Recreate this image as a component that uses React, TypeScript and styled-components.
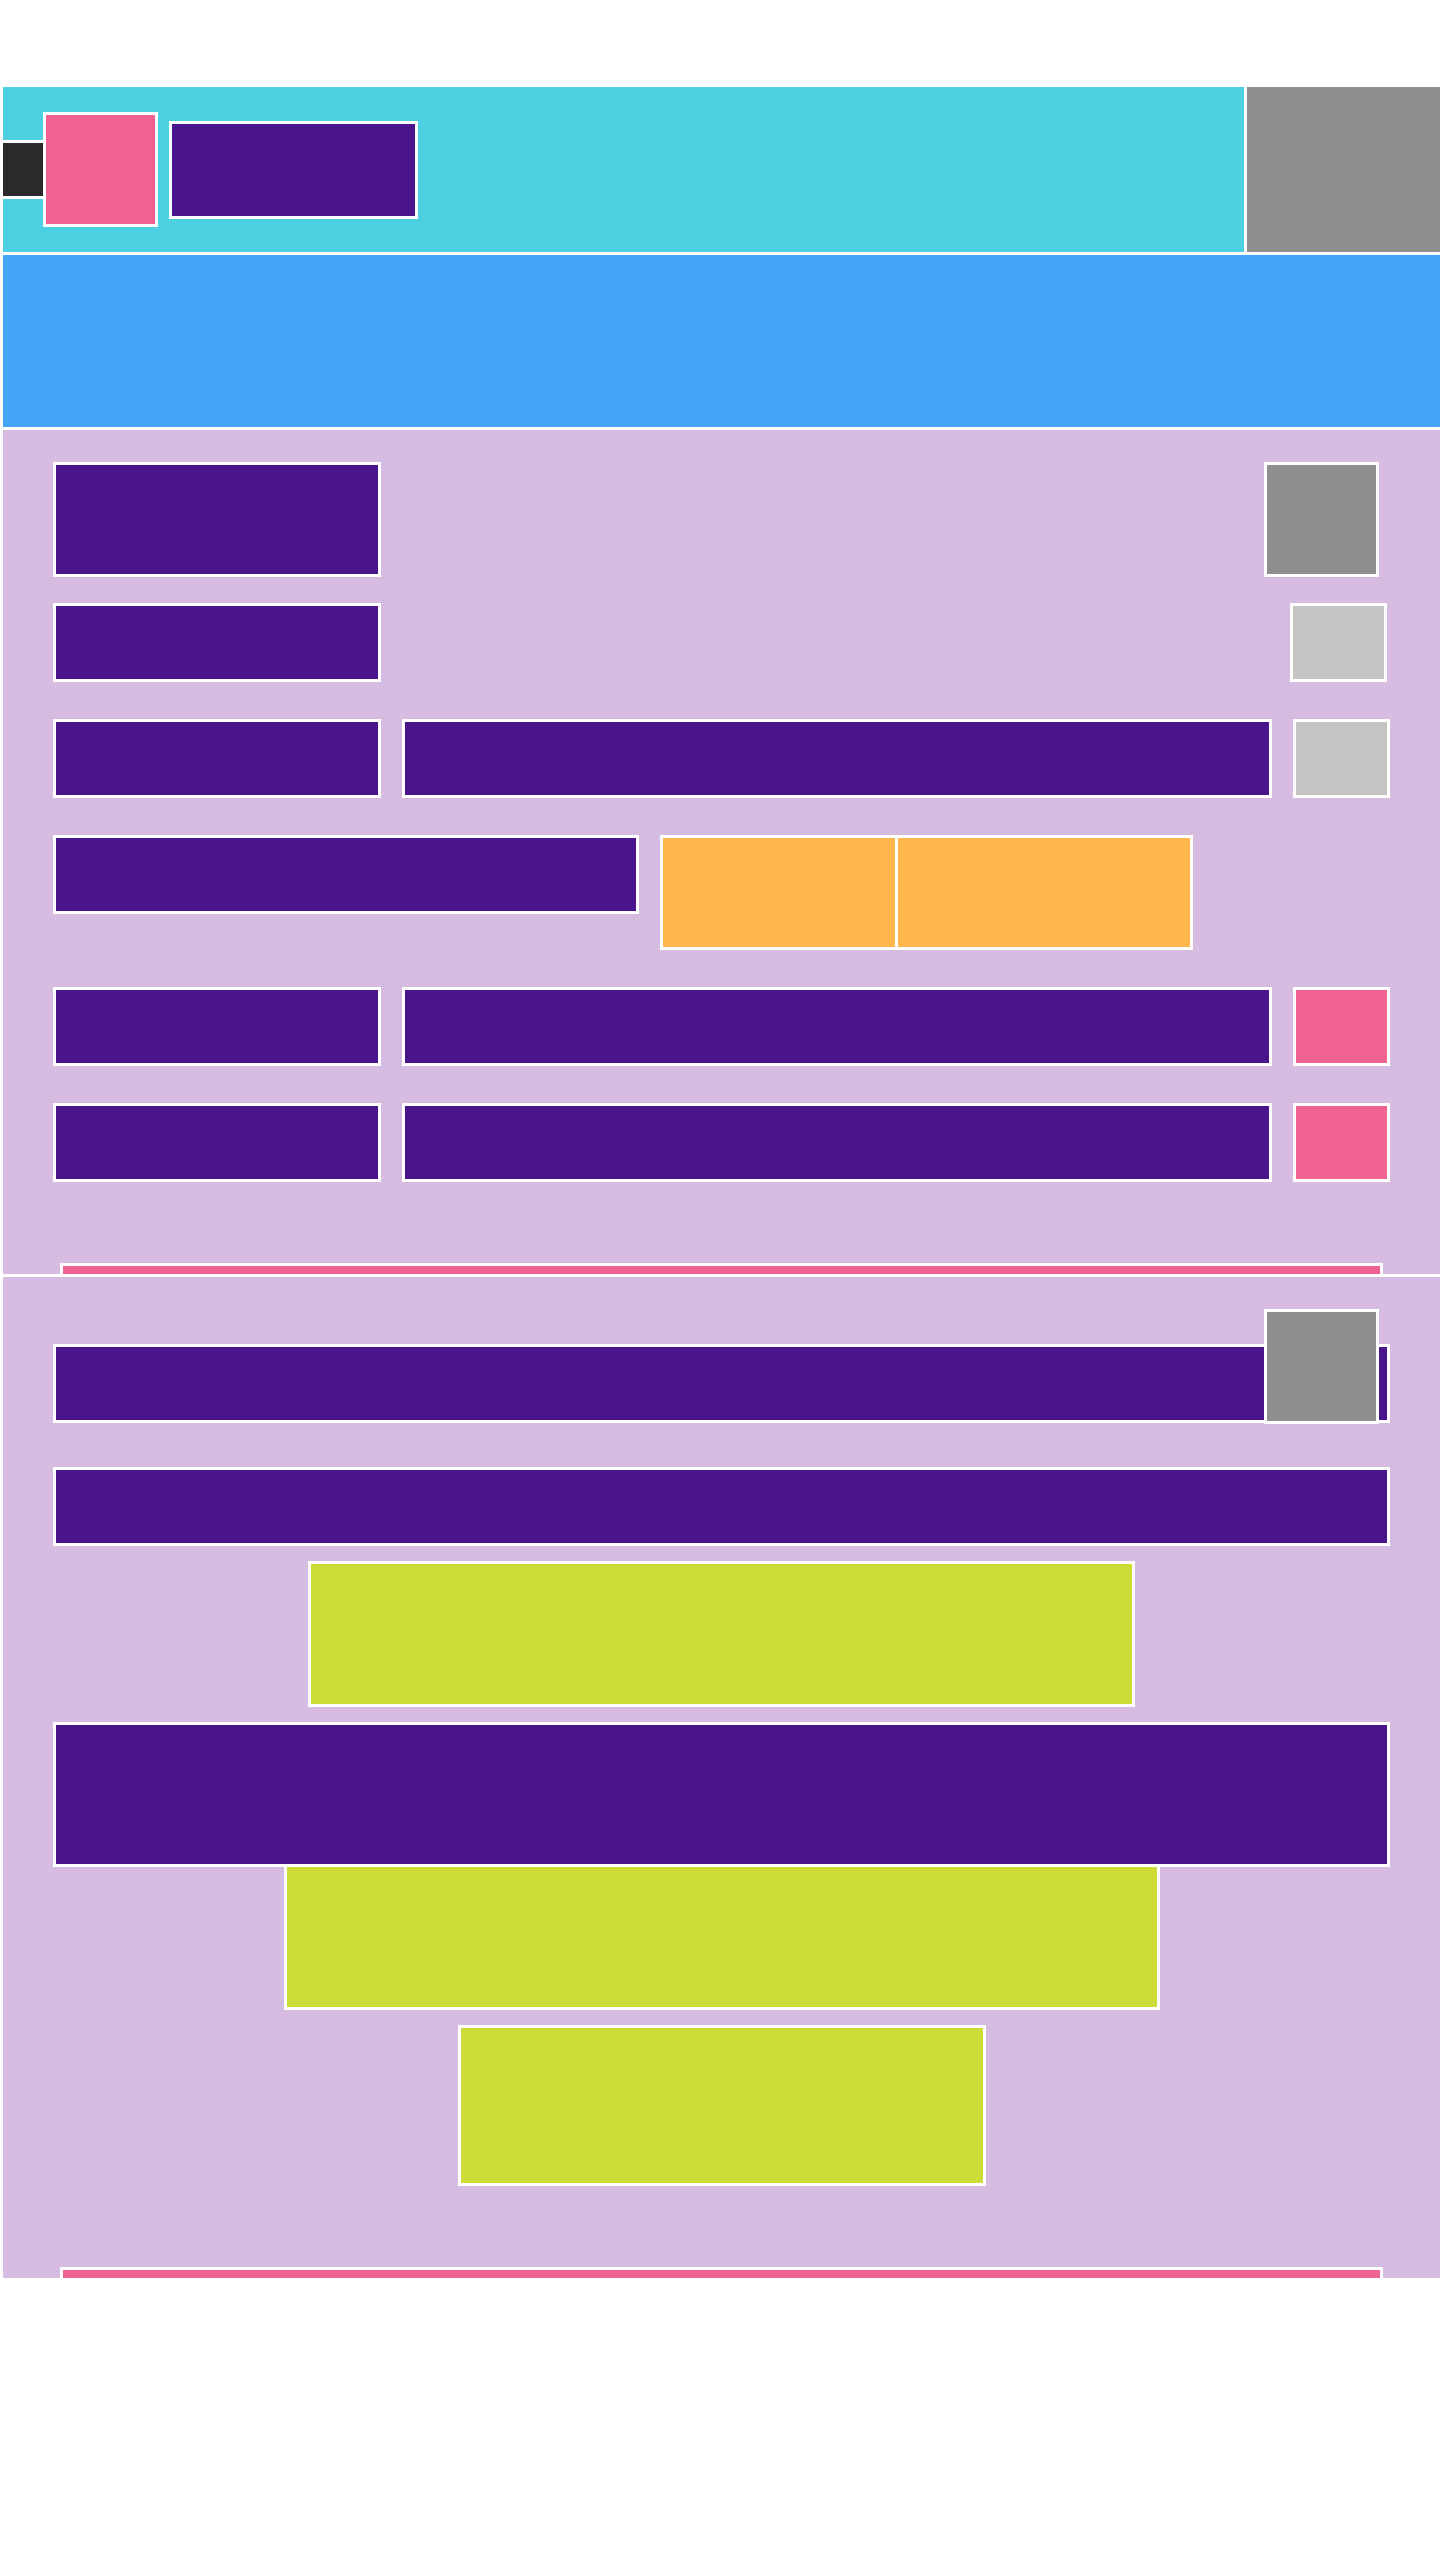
import React from "react";
import styled, { createGlobalStyle } from "styled-components";

const GlobalStyle = createGlobalStyle`
  html, body {
    margin: 0;
    padding: 0;
    background: #fff;
    overflow-x: hidden;
  }
  body {
    font-family: "Liberation Sans", Arial, sans-serif;
  }
  *, *::before, *::after {
    box-sizing: border-box;
  }
`;

const Page = styled.div`
  width: 1443px;
  padding-top: 84px;
  display: flex;
  flex-direction: column;
`;

// every block in the wireframe is a flat colour with a 3px white frame
const Tile = styled.div<{ $w?: number; $h: number }>`
  flex-shrink: 0;
  width: ${(p) => (p.$w ? `${p.$w}px` : "auto")};
  height: ${(p) => p.$h}px;
  border: 3px solid #fff;
`;

/* header */
const TopBar = styled.header`
  display: flex;
  height: 171px;
`;

const Brand = styled.div`
  width: 1247px;
  display: flex;
  align-items: center;
  background: #4dd0e1;
  border: 3px solid #fff;
`;

const MenuToggle = styled(Tile)`
  background: #2a2a2a;
  margin-left: -3px;
`;

const Logo = styled(Tile)`
  background: #f06292;
  margin-left: -3px;
`;

const Title = styled(Tile)`
  background: #4a148c;
  margin-left: 11px;
`;

const Account = styled.div`
  flex: 1;
  margin-left: -3px;
  background: #8f8f8f;
  border: 3px solid #fff;
`;

const Banner = styled.div`
  height: 178px;
  margin-top: -3px;
  background: #42a5f5;
  border: 3px solid #fff;
`;

/* panels */
const Panel = styled.section<{ $h: number; $pt: number }>`
  position: relative;
  height: ${(p) => p.$h}px;
  margin-top: -3px;
  padding: ${(p) => p.$pt}px 50px 0;
  display: flex;
  flex-direction: column;
  background: #d7bce2;
  border: 3px solid #fff;
  overflow: hidden;
`;

const CornerAction = styled.div`
  position: absolute;
  top: 32px;
  right: 61px;
  width: 115px;
  height: 115px;
  background: #8f8f8f;
  border: 3px solid #fff;
`;

const Row = styled.div<{ $mt?: number }>`
  display: flex;
  align-items: flex-start;
  gap: 21px;
  margin-top: ${(p) => p.$mt ?? 0}px;
`;

const Label = styled(Tile)`
  background: #4a148c;
`;

const Field = styled.div<{ $h: number; $mb?: number }>`
  flex: 1;
  height: ${(p) => p.$h}px;
  background: #4a148c;
  border: 3px solid #fff;
`;

const Check = styled(Tile)<{ $push?: boolean }>`
  background: #c4c4c4;
  margin-left: ${(p) => (p.$push ? "auto" : "0")};
  margin-right: ${(p) => (p.$push ? "3px" : "0")};
`;

const Remove = styled(Tile)`
  background: #f06292;
`;

const Segments = styled.div`
  display: flex;
  gap: 3px;
  width: 533px;
  height: 115px;
  background: #fff;
  border: 3px solid #fff;
`;

const Segment = styled.div<{ $w?: number }>`
  flex: ${(p) => (p.$w ? `0 0 ${p.$w}px` : "1")};
  background: #ffb74d;
`;

const Preview = styled(Tile)<{ $mt: number }>`
  align-self: center;
  margin-top: ${(p) => p.$mt}px;
  background: #cddc39;
`;

const PanelFooter = styled.div`
  flex-shrink: 0;
  width: 1323px;
  height: 40px;
  margin: 81px 0 0 7px;
  background: #f06292;
  border: 3px solid #fff;
`;

const FieldRow: React.FC<{ mt: number; danger?: boolean }> = ({ mt, danger }) => (
  <Row $mt={mt}>
    <Label $w={328} $h={79} />
    <Field $h={79} />
    {danger ? <Remove $w={97} $h={79} /> : <Check $w={97} $h={79} />}
  </Row>
);

const App: React.FC = () => {
  return (
    <>
      <GlobalStyle />
      <Page>
        <TopBar>
          <Brand>
            <MenuToggle $w={46} $h={59} />
            <Logo $w={115} $h={115} />
            <Title $w={249} $h={98} />
          </Brand>
          <Account />
        </TopBar>

        <Banner />

        <Panel $h={850} $pt={32}>
          <CornerAction />
          <Row>
            <Label $w={328} $h={115} />
          </Row>
          <Row $mt={26}>
            <Label $w={328} $h={79} />
            <Check $w={97} $h={79} $push />
          </Row>
          <FieldRow mt={37} />
          <Row $mt={37}>
            <Label $w={586} $h={79} />
            <Segments>
              <Segment $w={232} />
              <Segment />
            </Segments>
          </Row>
          <FieldRow mt={37} danger />
          <FieldRow mt={37} danger />
          <PanelFooter />
        </Panel>

        <Panel $h={1007} $pt={67}>
          <CornerAction />
          <Row>
            <Field $h={79} />
          </Row>
          <Row $mt={44}>
            <Field $h={79} />
          </Row>
          <Preview $w={827} $h={146} $mt={15} />
          <Row $mt={15}>
            <Field $h={145} />
          </Row>
          <Preview $w={876} $h={146} $mt={-3} />
          <Preview $w={528} $h={161} $mt={15} />
          <PanelFooter />
        </Panel>
      </Page>
    </>
  );
};

export default App;
